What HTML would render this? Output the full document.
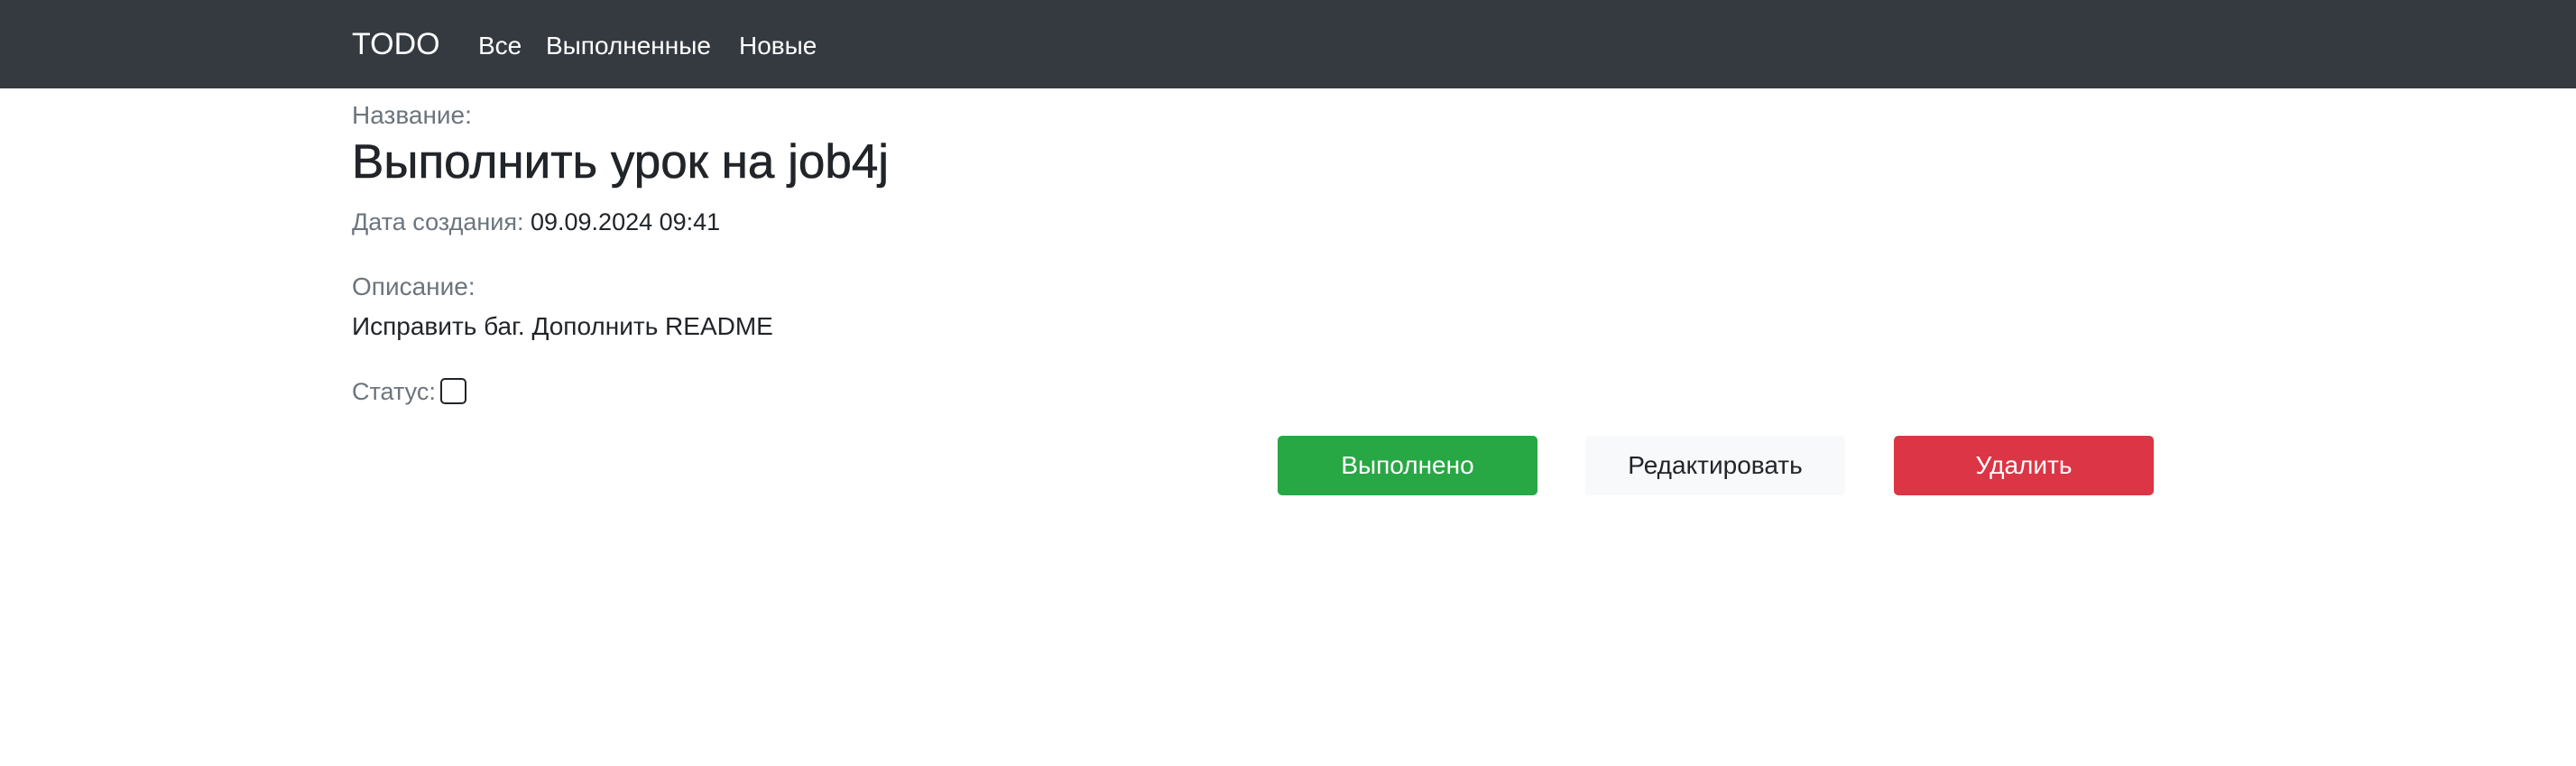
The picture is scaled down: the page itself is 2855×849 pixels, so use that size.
<!DOCTYPE html>
<html><head><meta charset="utf-8"><style>
html,body{margin:0;padding:0;width:2855px;height:849px;background:#fff;overflow:hidden;font-family:"Liberation Sans","Noto Sans CJK SC",sans-serif;}
.nav{position:absolute;left:0;top:0;width:2855px;height:98px;background:#343a40;}
.a{position:absolute;line-height:1;white-space:nowrap;}
.n{color:#fff;font-size:28px;top:37px;}
.l{color:#6c757d;font-size:28px;}
.t{color:#212529;font-size:28px;}
.btn{position:absolute;top:483px;width:288px;height:66px;border-radius:5px;font-size:28px;line-height:66px;text-align:center;}
</style></head><body>
<div class="nav"></div>
<div class="a" style="left:390px;top:32px;font-size:34px;color:#fff;">TODO</div>
<div class="a n" style="left:530px;">Все</div>
<div class="a n" style="left:605px;">Выполненные</div>
<div class="a n" style="left:819px;">Новые</div>
<div class="a l" style="left:390px;top:114px;">Название:</div>
<div class="a" style="left:390px;top:153px;font-size:53px;color:#212529;-webkit-text-stroke:0.6px #212529;">Выполнить урок на job4j</div>
<div class="a l" style="left:390px;top:233px;font-size:27px;">Дата создания: <span style="color:#212529">09.09.2024 09:41</span></div>
<div class="a l" style="left:390px;top:304px;">Описание:</div>
<div class="a t" style="left:390px;top:348px;">Исправить баг. Дополнить README</div>
<div class="a l" style="left:390px;top:421px;font-size:27px;">Статус:</div>
<div style="position:absolute;left:488px;top:419px;width:25px;height:25px;border:2px solid #212529;border-radius:5px;"></div>
<div class="btn" style="left:1416px;background:#28a745;color:#fff;">Выполнено</div>
<div class="btn" style="left:1757px;background:#f8f9fa;color:#212529;">Редактировать</div>
<div class="btn" style="left:2099px;background:#dc3545;color:#fff;">Удалить</div>
</body></html>
